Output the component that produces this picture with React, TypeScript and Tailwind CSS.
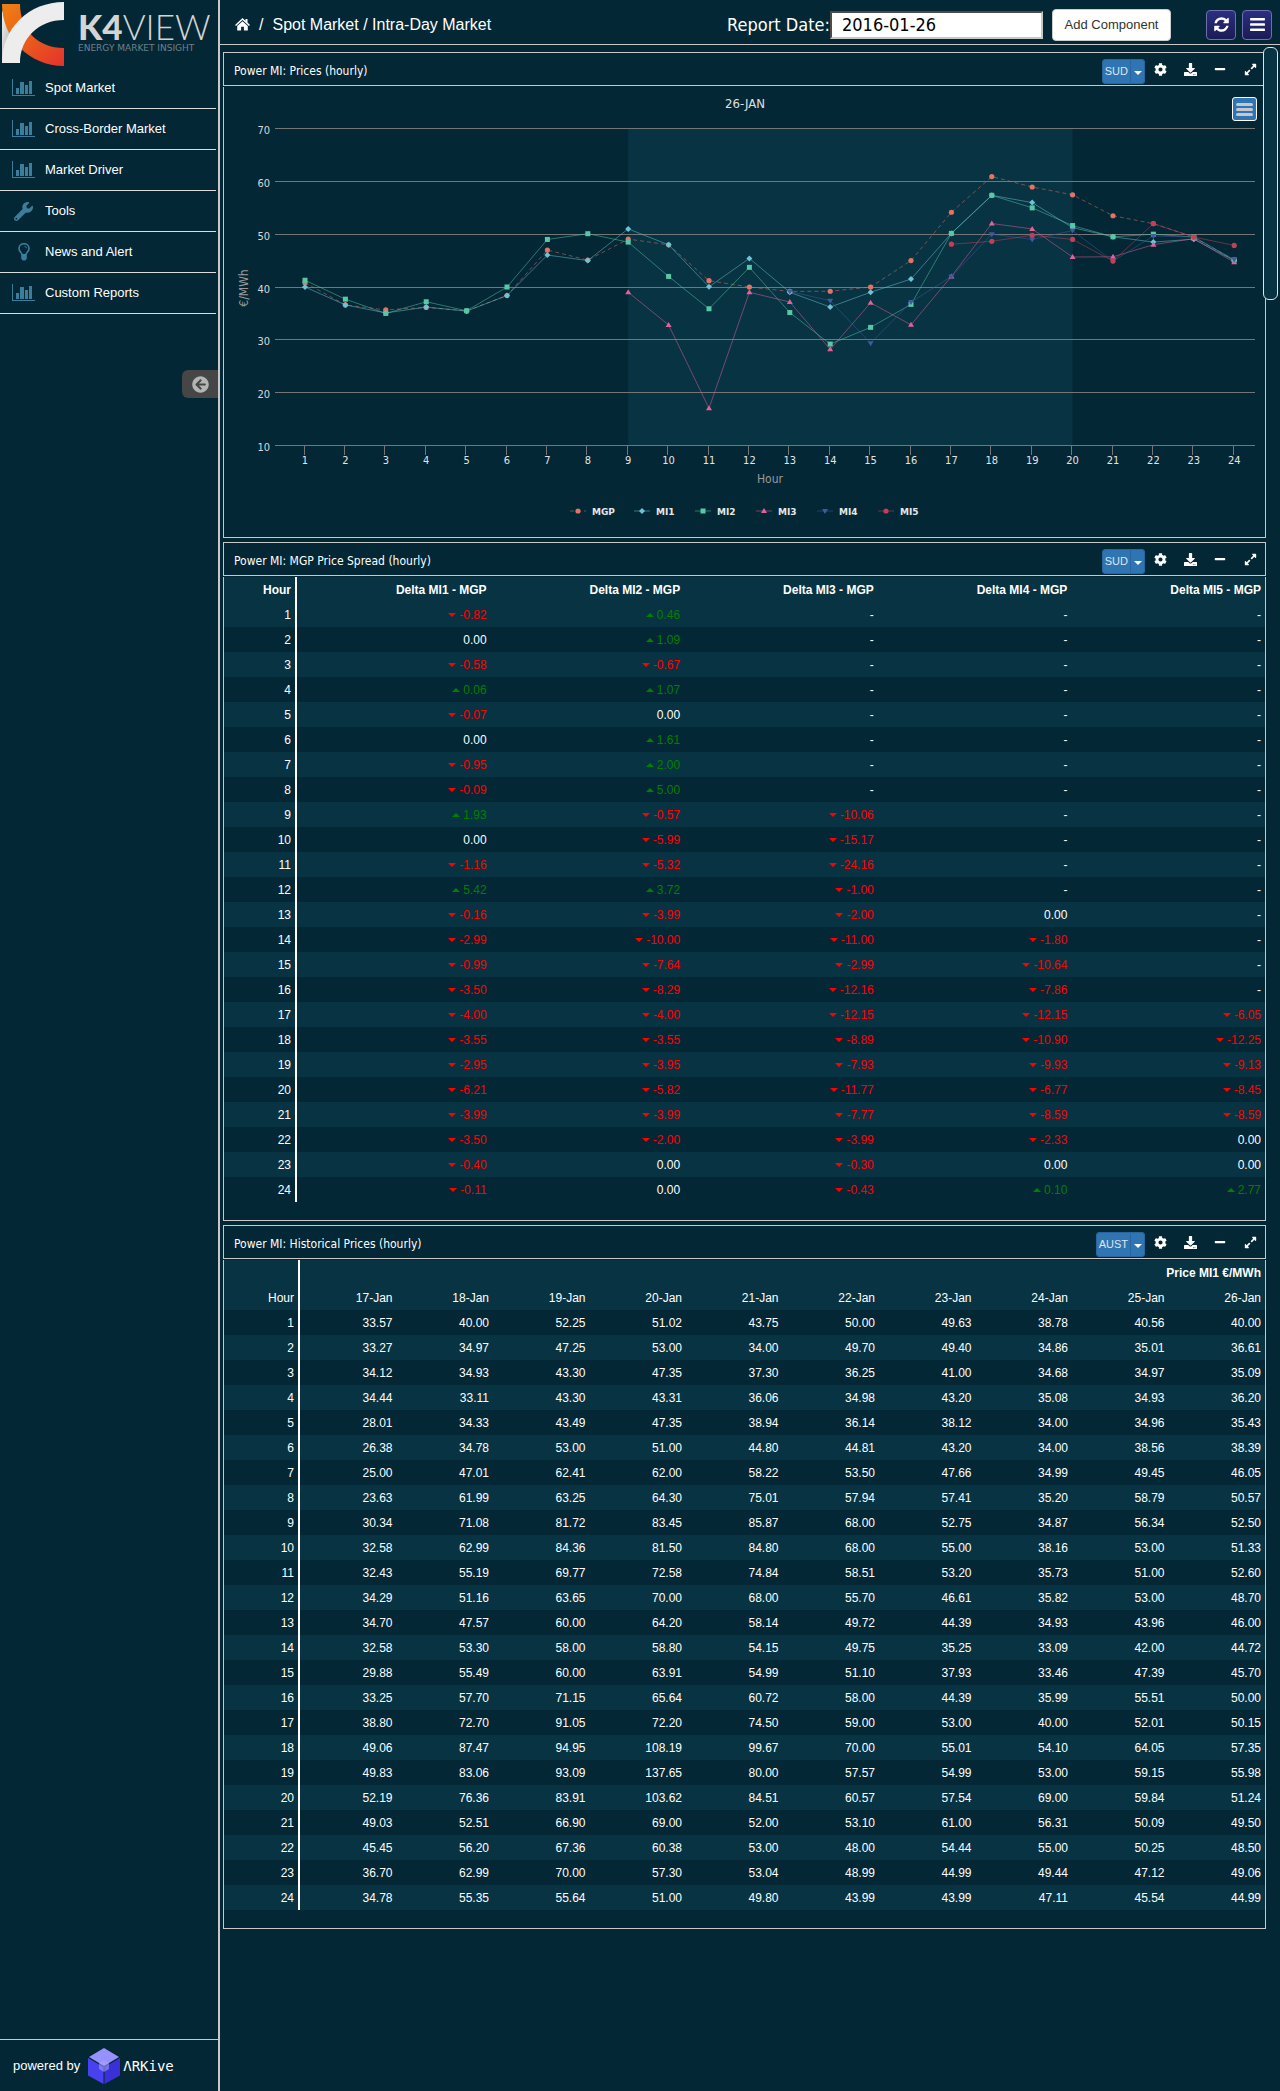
import React from "react";
import {
  FaArrowCircleLeft,
  FaBars,
  FaCog,
  FaDownload,
  FaExpandAlt,
  FaMinus,
  FaWrench,
} from "react-icons/fa";

const UI_FONT = "font-['DejaVu_Sans_Condensed','Noto_Sans',sans-serif]";

type Delta = number | null;

/* MGP reference price per hour, followed by the MI1..MI5 spreads against it. */
const mgp = [
  40.82, 36.61, 35.67, 36.14, 35.5, 38.39, 47.0, 45.09, 49.07, 47.99, 41.2, 40.0,
  39.16, 39.2, 40.0, 45.0, 54.15, 60.9, 58.93, 57.45, 53.49, 52.0, 49.46, 45.1,
];

const spread: Delta[][] = [
  [-0.82, 0.46, null, null, null],
  [0, 1.09, null, null, null],
  [-0.58, -0.67, null, null, null],
  [0.06, 1.07, null, null, null],
  [-0.07, 0, null, null, null],
  [0, 1.61, null, null, null],
  [-0.95, 2.0, null, null, null],
  [-0.09, 5.0, null, null, null],
  [1.93, -0.57, -10.06, null, null],
  [0, -5.99, -15.17, null, null],
  [-1.16, -5.32, -24.16, null, null],
  [5.42, 3.72, -1.0, null, null],
  [-0.16, -3.99, -2.0, 0, null],
  [-2.99, -10.0, -11.0, -1.8, null],
  [-0.99, -7.64, -2.99, -10.64, null],
  [-3.5, -8.29, -12.16, -7.86, null],
  [-4.0, -4.0, -12.15, -12.15, -6.05],
  [-3.55, -3.55, -8.89, -10.9, -12.25],
  [-2.95, -3.95, -7.93, -9.93, -9.13],
  [-6.21, -5.82, -11.77, -6.77, -8.45],
  [-3.99, -3.99, -7.77, -8.59, -8.59],
  [-3.5, -2.0, -3.99, -2.33, 0],
  [-0.4, 0, -0.3, 0, 0],
  [-0.11, 0, -0.43, 0.1, 2.77],
];

const days = ["17-Jan", "18-Jan", "19-Jan", "20-Jan", "21-Jan", "22-Jan", "23-Jan", "24-Jan", "25-Jan", "26-Jan"];

const history = [
  "33.57 40.00 52.25 51.02 43.75 50.00 49.63 38.78 40.56 40.00",
  "33.27 34.97 47.25 53.00 34.00 49.70 49.40 34.86 35.01 36.61",
  "34.12 34.93 43.30 47.35 37.30 36.25 41.00 34.68 34.97 35.09",
  "34.44 33.11 43.30 43.31 36.06 34.98 43.20 35.08 34.93 36.20",
  "28.01 34.33 43.49 47.35 38.94 36.14 38.12 34.00 34.96 35.43",
  "26.38 34.78 53.00 51.00 44.80 44.81 43.20 34.00 38.56 38.39",
  "25.00 47.01 62.41 62.00 58.22 53.50 47.66 34.99 49.45 46.05",
  "23.63 61.99 63.25 64.30 75.01 57.94 57.41 35.20 58.79 50.57",
  "30.34 71.08 81.72 83.45 85.87 68.00 52.75 34.87 56.34 52.50",
  "32.58 62.99 84.36 81.50 84.80 68.00 55.00 38.16 53.00 51.33",
  "32.43 55.19 69.77 72.58 74.84 58.51 53.20 35.73 51.00 52.60",
  "34.29 51.16 63.65 70.00 68.00 55.70 46.61 35.82 53.00 48.70",
  "34.70 47.57 60.00 64.20 58.14 49.72 44.39 34.93 43.96 46.00",
  "32.58 53.30 58.00 58.80 54.15 49.75 35.25 33.09 42.00 44.72",
  "29.88 55.49 60.00 63.91 54.99 51.10 37.93 33.46 47.39 45.70",
  "33.25 57.70 71.15 65.64 60.72 58.00 44.39 35.99 55.51 50.00",
  "38.80 72.70 91.05 72.20 74.50 59.00 53.00 40.00 52.01 50.15",
  "49.06 87.47 94.95 108.19 99.67 70.00 55.01 54.10 64.05 57.35",
  "49.83 83.06 93.09 137.65 80.00 57.57 54.99 53.00 59.15 55.98",
  "52.19 76.36 83.91 103.62 84.51 60.57 57.54 69.00 59.84 51.24",
  "49.03 52.51 66.90 69.00 52.00 53.10 61.00 56.31 50.09 49.50",
  "45.45 56.20 67.36 60.38 53.00 48.00 54.44 55.00 50.25 48.50",
  "36.70 62.99 70.00 57.30 53.04 48.99 44.99 49.44 47.12 49.06",
  "34.78 55.35 55.64 51.00 49.80 43.99 43.99 47.11 45.54 44.99",
].map((row) => row.split(" "));

/* ---------- icons ---------- */

function BarChartIcon() {
  return (
    <svg width="23" height="18" viewBox="0 0 23 18" fill="#3d7d9c" aria-hidden="true">
      <rect x="0" y="0" width="1" height="17" />
      <rect x="0" y="16" width="23" height="1" />
      <rect x="4" y="9" width="3" height="6" />
      <rect x="8" y="3" width="4" height="12" />
      <rect x="13" y="6" width="3" height="9" />
      <rect x="17" y="2" width="3" height="13" />
    </svg>
  );
}

function BulbIcon() {
  return (
    <svg width="12" height="18" viewBox="0 0 12 18" fill="none" aria-hidden="true">
      <path
        d="M4 11.500C3.700 9.500 1 8.500 1 5.500A5 4.800 0 0 1 11 5.500C11 8.500 8.300 9.500 8 11.500"
        stroke="currentColor"
        strokeWidth="1.600"
      />
      <path d="M6.500 3.200Q8.300 3.600 8.500 5.300" stroke="currentColor" />
      <path d="M3.200 11h5.600v4.800L7.300 17.500H4.700L3.200 15.800z" fill="currentColor" />
    </svg>
  );
}

function HomeIcon() {
  return (
    <svg width="15" height="13" viewBox="0 0 15 13" fill="#fff" aria-hidden="true">
      <path d="M7.500 0 0 7l1 1 6.500-6L14 8l1-1-2.500-2.400V1h-2v1.700z" />
      <path d="M7.500 3.200 2.200 8v4.500h3.900V8.700h2.800v3.800h3.900V8z" />
    </svg>
  );
}

function RefreshIcon() {
  return (
    <svg width="15" height="17" viewBox="0 0 1536 1792" fill="currentColor" aria-hidden="true">
      <path d="M1511 1056q0 5-1 7-64 268-268 434.500t-478 166.500q-146 0-282.500-55t-243.500-157l-129 129q-19 19-45 19t-45-19-19-45v-448q0-26 19-45t45-19h448q26 0 45 19t19 45-19 45l-137 137q71 66 161 102t187 36q134 0 250-65t186-179q11-17 53-117 8-23 30-23h192q13 0 22.500 9.500t9.500 22.500zM1536 256v448q0 26-19 45t-45 19h-448q-26 0-45-19t-19-45 19-45l138-138q-148-137-349-137-134 0-250 65t-186 179q-11 17-53 117-8 23-30 23h-199q-13 0-22.500-9.500t-9.500-22.500v-7q65-268 270-434.500t480-166.500q146 0 284 55.500t245 156.500l130-129q19-19 45-19t45 19 19 45z" />
    </svg>
  );
}

function KLogo() {
  return (
    <svg width="64" height="68" viewBox="0 0 64 68" className="shrink-0" aria-hidden="true">
      <defs>
        <linearGradient id="flame" x1="0" y1="0" x2="1" y2="1">
          <stop offset="0" stopColor="#f08010" />
          <stop offset="0.5" stopColor="#ea5b1c" />
          <stop offset="1" stopColor="#e5322d" />
        </linearGradient>
        <linearGradient id="fold" x1="0" y1="0" x2="1" y2="1">
          <stop offset="0" stopColor="#f2f2f2" />
          <stop offset="1" stopColor="#a5a5a5" />
        </linearGradient>
      </defs>
      <path d="M2 10V63L12 33z" fill="url(#fold)" />
      <path d="M2 4H20C20 30 38 48 64 48V66C29 66 2 38 2 4z" fill="url(#flame)" />
      <path d="M2 63C2 28 29 2 64 2V20C39 20 20 38 20 63z" fill="#ededed" />
    </svg>
  );
}

function CubeLogo() {
  return (
    <svg width="34" height="38" viewBox="0 0 34 38" aria-hidden="true">
      <path d="M17 1 32 10 17 19 2 10z" fill="#9790ff" />
      <path d="M1 11 16.500 20V37L1 28.500z" fill="#4a41ee" />
      <path d="M33 11 17.500 20V37L33 28.500z" fill="#3a30d6" />
      <path d="M17 13 22 16V22L17 25 12 22V16z" fill="#a9a4ff" opacity="0.55" />
    </svg>
  );
}

/* ---------- chart ---------- */

const px = (hour: number) => 81 + (hour - 1) * 40.4;
const py = (value: number) => 358.5 - (value - 10) * 5.283;

type Series = { name: string; color: string; shape: string; values: Delta[]; dashed?: boolean };

const series: Series[] = [
  { name: "MGP", color: "#e27466", shape: "circle", values: mgp, dashed: true },
  { name: "MI1", color: "#6cc3d5", shape: "diamond", values: [] },
  { name: "MI2", color: "#56c8a6", shape: "square", values: [] },
  { name: "MI3", color: "#e0629a", shape: "up", values: [] },
  { name: "MI4", color: "#41599e", shape: "down", values: [] },
  { name: "MI5", color: "#c33f57", shape: "circle", values: [] },
].map((s, i) =>
  i === 0
    ? s
    : {
        ...s,
        values: mgp.map((base, h) => {
          const d = spread[h][i - 1];
          return d === null ? null : base + d;
        }),
      },
);

function Marker({ shape, x, y, color }: { shape: string; x: number; y: number; color: string }) {
  switch (shape) {
    case "diamond":
      return <path d={`M${x} ${y - 3}l3 3-3 3-3-3z`} fill={color} />;
    case "square":
      return <rect x={x - 2.5} y={y - 2.5} width="5" height="5" fill={color} />;
    case "up":
      return <path d={`M${x} ${y - 3}l3 5h-6z`} fill={color} />;
    case "down":
      return <path d={`M${x} ${y + 3}l3-5h-6z`} fill={color} />;
    default:
      return <circle cx={x} cy={y} r="2.6" fill={color} />;
  }
}

const legendX = [346, 410, 471, 532, 593, 654];

function PriceChart() {
  const hours = Array.from({ length: 24 }, (_, i) => i + 1);
  return (
    <svg viewBox="0 0 1041 450" className={`block h-auto w-full ${UI_FONT}`} role="img" aria-label="26-JAN prices">
      <rect x={px(9)} y="41" width={px(20) - px(9)} height="317" fill="#083342" />
      {[70, 60, 50, 40, 30, 20, 10].map((v) => {
        const y = Math.floor(py(v)) + 0.5;
        return (
          <g key={v}>
            <line x1="51" x2="1031" y1={y} y2={y} stroke="#737577" />
            <text x="46" y={y + 5} textAnchor="end" fontSize="11" fill="#d8d8d8">
              {v}
            </text>
          </g>
        );
      })}
      {hours.map((h) => {
        const x = Math.floor(px(h)) - 0.5;
        return (
          <g key={h}>
            <line x1={x} x2={x} y1="359" y2="368" stroke="#737577" />
            <text x={px(h)} y="377" textAnchor="middle" fontSize="11" fill="#e4e4e4">
              {h}
            </text>
          </g>
        );
      })}
      {series.map((s) => {
        const pts = s.values.map((v, i) => (v === null ? null : [px(i + 1), py(v)])).filter(Boolean) as number[][];
        return (
          <g key={s.name}>
            <polyline
              points={pts.map((p) => p.join(",")).join(" ")}
              fill="none"
              stroke={s.color}
              strokeOpacity="0.5"
              strokeDasharray={s.dashed ? "4 3" : undefined}
            />
            {pts.map(([x, y]) => (
              <Marker key={x} shape={s.shape} x={x} y={y} color={s.color} />
            ))}
          </g>
        );
      })}
      <text x="521" y="21" textAnchor="middle" fontSize="13" fill="#e0e0e0">
        26-JAN
      </text>
      <text x="546" y="396" textAnchor="middle" fontSize="12" fill="#9a9a9a">
        Hour
      </text>
      <text transform="translate(24 201) rotate(-90)" textAnchor="middle" fontSize="12" fill="#9a9a9a">
        €/MWh
      </text>
      {series.map((s, i) => (
        <g key={s.name}>
          <line
            x1={legendX[i]}
            x2={legendX[i] + 16}
            y1="424"
            y2="424"
            stroke={s.color}
            strokeOpacity="0.5"
            strokeDasharray={s.dashed ? "4 3" : undefined}
          />
          <Marker shape={s.shape} x={legendX[i] + 8} y={424} color={s.color} />
          <text
            x={legendX[i] + 22}
            y="428"
            fontSize="9"
            fontWeight="700"
            fill="#e6e6e6"
            className="font-['DejaVu_Sans',sans-serif]"
          >
            {s.name}
          </text>
        </g>
      ))}
    </svg>
  );
}

/* ---------- panels ---------- */

const toolClass = "flex h-8 w-[30px] items-center justify-center text-white";

function Panel({ title, zone, children }: { title: string; zone: string; children: React.ReactNode }) {
  return (
    <section>
      <header className="flex h-[34px] items-center border border-[#c8c8c8] pl-[10px]">
        <h2 className={`flex-1 pt-[3px] text-xs text-white ${UI_FONT}`}>{title}</h2>
        <div className="mt-1 flex h-[25px] rounded-sm bg-[#2f75b3] text-[11px] text-[#dfe6ec]">
          <button type="button" className="rounded-l-sm border border-[#28659c] px-[2px]">
            {zone}
          </button>
          <button
            type="button"
            aria-label={`Choose zone, ${zone}`}
            className="flex w-[14px] items-center justify-center rounded-r-sm border border-l-0 border-[#28659c] pt-1"
          >
            <svg width="8" height="4" viewBox="0 0 8 4" fill="#fff" aria-hidden="true">
              <path d="M0 0h8L4 4z" />
            </svg>
          </button>
        </div>
        <button type="button" aria-label="Settings" className={toolClass}>
          <FaCog size={13} />
        </button>
        <button type="button" aria-label="Download" className={toolClass}>
          <FaDownload size={13} />
        </button>
        <button type="button" aria-label="Minimize" className={toolClass}>
          <FaMinus size={12} />
        </button>
        <button type="button" aria-label="Expand" className={toolClass}>
          <FaExpandAlt size={13} />
        </button>
      </header>
      <div className="relative mt-px border-x border-b border-[#c8c8c8]">{children}</div>
    </section>
  );
}

function DeltaCell({ value }: { value: Delta }) {
  if (value === null) return <td className="pr-1">-</td>;
  if (value === 0) return <td className="pr-1">0.00</td>;
  const down = value < 0;
  return (
    <td className={down ? "pr-1 text-[#ff0000]" : "pr-1 text-[#008000]"}>
      <svg width="8" height="4" viewBox="0 0 8 4" fill="currentColor" className="mr-[3px] inline-block align-[2px]" aria-hidden="true">
        <path d={down ? "M0 0h8L4 4z" : "M0 4h8L4 0z"} />
      </svg>
      {value.toFixed(2)}
    </td>
  );
}

const tableClass = "mb-[18px] w-full table-fixed border-separate border-spacing-0 text-right text-xs text-white";

function SpreadTable() {
  return (
    <table className={tableClass}>
      <colgroup>
        <col className="w-[73px]" />
      </colgroup>
      <thead>
        <tr className="h-[25px] bg-[#083342]">
          <th className="border-r-2 border-white pr-1">Hour</th>
          {[1, 2, 3, 4, 5].map((n) => (
            <th key={n} className="pr-1">{`Delta MI${n} - MGP`}</th>
          ))}
        </tr>
      </thead>
      <tbody>
        {spread.map((row, i) => (
          <tr key={i} className="h-[25px] odd:bg-[#083342]">
            <td className="border-r-2 border-white pr-1">{i + 1}</td>
            {row.map((v, c) => (
              <DeltaCell key={c} value={v} />
            ))}
          </tr>
        ))}
      </tbody>
    </table>
  );
}

function HistoryTable() {
  return (
    <table className={tableClass}>
      <colgroup>
        <col className="w-[76px]" />
        {days.map((d) => (
          <col key={d} />
        ))}
      </colgroup>
      <thead className="bg-[#083342]">
        <tr className="h-[25px]">
          <td className="border-r-2 border-white" />
          <th colSpan={10} className="pr-1">
            Price MI1 €/MWh
          </th>
        </tr>
        <tr className="h-[25px]">
          <th className="border-r-2 border-white pr-1 font-normal">Hour</th>
          {days.map((d) => (
            <th key={d} className="pr-1 font-normal">
              {d}
            </th>
          ))}
        </tr>
      </thead>
      <tbody>
        {history.map((row, i) => (
          <tr key={i} className="h-[25px] even:bg-[#083342]">
            <td className="border-r-2 border-white pr-1">{i + 1}</td>
            {row.map((v, c) => (
              <td key={c} className="pr-1">
                {v}
              </td>
            ))}
          </tr>
        ))}
      </tbody>
    </table>
  );
}

/* ---------- page ---------- */

const nav = [
  { label: "Spot Market", icon: <BarChartIcon /> },
  { label: "Cross-Border Market", icon: <BarChartIcon /> },
  { label: "Market Driver", icon: <BarChartIcon /> },
  { label: "Tools", icon: <FaWrench size={19} /> },
  { label: "News and Alert", icon: <BulbIcon /> },
  { label: "Custom Reports", icon: <BarChartIcon /> },
];

const squareButton =
  "flex h-[30px] w-[30px] items-center justify-center rounded-sm border border-[#6f6fae] bg-linear-to-b from-[#2a2f80] to-[#1b1b55] text-white";

export default function App() {
  return (
    <div className="flex min-h-screen bg-[#032735] font-['Liberation_Sans',Arial,sans-serif] text-white">
      <aside className="flex w-[220px] shrink-0 flex-col border-r-2 border-[#c8c8c8]">
        <a href="#home" className="flex h-[68px] items-start">
          <KLogo />
          <span className="ml-[14px] mt-3 flex flex-col gap-1 font-['Lato',sans-serif] text-[#d4d4d4]">
            <span className="flex text-[35px] leading-[28px]">
              <span className="font-black">K4</span>
              <span className="font-light">VIEW</span>
            </span>
            <span className="font-['DejaVu_Sans',sans-serif] text-[9px] leading-[8px] whitespace-nowrap text-[#6f8189]">
              ENERGY MARKET INSIGHT
            </span>
          </span>
        </a>
        <nav className="mr-[2px]">
          {nav.map((item) => (
            <a key={item.label} href="#section" className="flex h-[41px] items-center border-b border-[#dcdcdc] pl-3 text-[13px]">
              <span className="mr-[10px] flex w-[23px] justify-center text-[#3d7d9c]">{item.icon}</span>
              {item.label}
            </a>
          ))}
        </nav>
        <button
          type="button"
          aria-label="Collapse sidebar"
          className="mt-14 flex h-7 w-9 items-center justify-center self-end rounded-l-md bg-[#464646] text-[#b4b4b4]"
        >
          <FaArrowCircleLeft size={17} />
        </button>
        <footer className="mt-auto flex h-[52px] items-center border-t border-[#c8c8c8] pl-[13px] text-[13px]">
          powered by
          <span className="ml-[7px] flex items-center gap-[2px]">
            <CubeLogo />
            <span className="font-['DejaVu_Sans_Mono',monospace] text-sm">ΛRKive</span>
          </span>
        </footer>
      </aside>

      <div className="min-w-0 flex-1">
        <header className="flex h-[45px] items-center border-b border-[#c8c8c8] pr-2 pl-[15px] pt-[5px]">
          <nav className="flex items-center gap-[9px] text-base" aria-label="Breadcrumb">
            <a href="#home" aria-label="Home">
              <HomeIcon />
            </a>
            <span>/</span>
            <span>Spot Market / Intra-Day Market</span>
          </nav>
          <label htmlFor="report-date" className={`ml-auto text-lg ${UI_FONT}`}>
            Report Date:
          </label>
          <input
            id="report-date"
            type="text"
            defaultValue="2016-01-26"
            className={`h-7 w-[213px] border-2 border-t-[#4a4a4a] border-r-[#c8c8c8] border-b-[#c8c8c8] border-l-[#4a4a4a] bg-white pl-[10px] text-lg text-black ${UI_FONT}`}
          />
          <button type="button" className="ml-[9px] h-8 w-[119px] rounded-sm border border-[#ccc] bg-white text-[13px] text-[#333]">
            Add Component
          </button>
          <button type="button" aria-label="Refresh" className={`ml-[35px] ${squareButton}`}>
            <RefreshIcon />
          </button>
          <button type="button" aria-label="Menu" className={`ml-[6px] ${squareButton}`}>
            <FaBars size={17} />
          </button>
        </header>

        <main className="relative flex flex-col gap-1 pt-[7px] pr-[14px] pl-[3px]">
          <Panel title="Power MI: Prices (hourly)" zone="SUD">
            <PriceChart />
            <button
              type="button"
              aria-label="Chart menu"
              className="absolute top-[10px] right-2 flex h-6 w-[25px] flex-col items-center justify-center gap-[2px] rounded-[3px] border border-white bg-[#2f75b3]"
            >
              <span className="h-[3px] w-[17px] rounded-sm bg-[#c4c8cc]" />
              <span className="h-[3px] w-[17px] rounded-sm bg-[#c4c8cc]" />
              <span className="h-[3px] w-[17px] rounded-sm bg-[#c4c8cc]" />
            </button>
          </Panel>
          <Panel title="Power MI: MGP Price Spread (hourly)" zone="SUD">
            <SpreadTable />
          </Panel>
          <Panel title="Power MI: Historical Prices (hourly)" zone="AUST">
            <HistoryTable />
          </Panel>
          <div className="absolute top-[2px] right-[2px] h-[253px] w-[15px] rounded-md border border-[#dfe4e6] bg-[#083342]" />
        </main>
      </div>
    </div>
  );
}
